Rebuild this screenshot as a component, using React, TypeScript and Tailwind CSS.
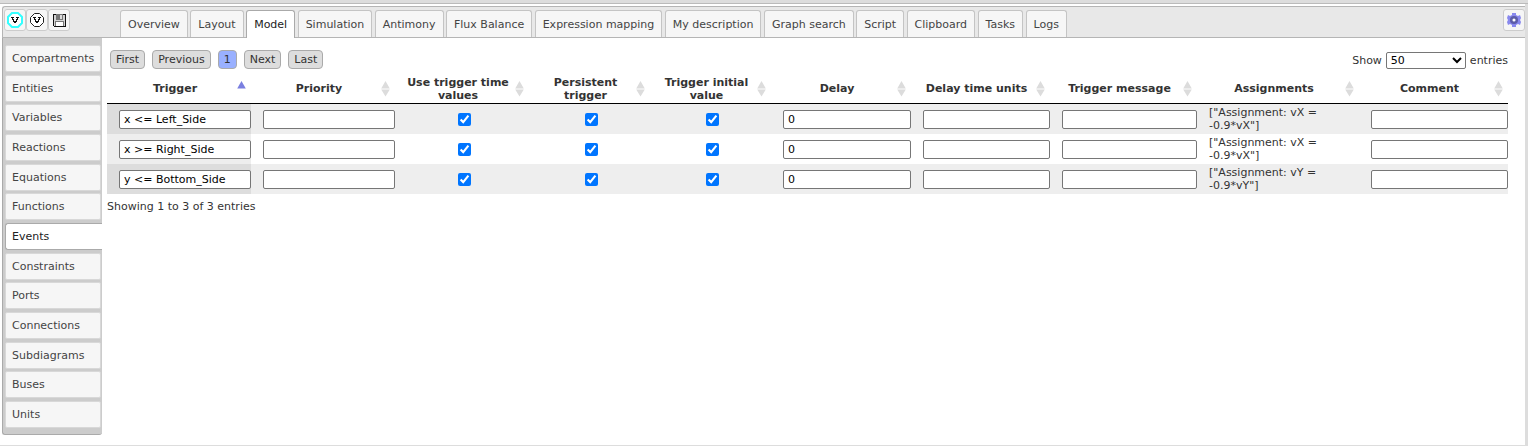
import { useState } from "react";

const tabs = [
  "Overview", "Layout", "Model", "Simulation", "Antimony", "Flux Balance", "Expression mapping",
  "My description", "Graph search", "Script", "Clipboard", "Tasks", "Logs",
];

const sections = [
  "Compartments", "Entities", "Variables", "Reactions", "Equations", "Functions", "Events",
  "Constraints", "Ports", "Connections", "Subdiagrams", "Buses", "Units",
];

const columns = [
  { title: "Trigger", width: "w-[144px]" },
  { title: "Priority", width: "w-[144px]" },
  { title: "Use trigger time values", width: "w-[134px]" },
  { title: "Persistent trigger", width: "w-[121px]" },
  { title: "Trigger initial value", width: "w-[121px]" },
  { title: "Delay", width: "w-[140px]" },
  { title: "Delay time units", width: "w-[139px]" },
  { title: "Trigger message", width: "w-[147px]" },
  { title: "Assignments", width: "w-[162px]" },
  { title: "Comment", width: "w-[149px]" },
];

const events = [
  { trigger: "x <= Left_Side", delay: "0", assignment: '["Assignment: vX = -0.9*vX"]' },
  { trigger: "x >= Right_Side", delay: "0", assignment: '["Assignment: vX = -0.9*vX"]' },
  { trigger: "y <= Bottom_Side", delay: "0", assignment: '["Assignment: vY = -0.9*vY"]' },
];

function DiagramIcon({ active = false }: { active?: boolean }) {
  return (
    <svg width="16" height="16" viewBox="0 0 16 16" aria-hidden="true">
      <path
        d={active ? "M5 1h6l4 4v6l-4 4H5l-4-4V5z" : "M5.500 1.500h5l4 4v5l-4 4h-5l-4-4v-5z"}
        fill="#fff"
        stroke={active ? "#33ffff" : "#222"}
        strokeWidth={active ? 2 : 1}
      />
      <path
        d="M4 5h3v1H4zM9 5h3v1H9zM5 6h1v1H5zM10 6h1v1h-1zM5 7h2v1H5zM9 7h2v1H9zM6 8h1v1H6zM9 8h1v1H9zM6 9h4v1H6zM7 10h2v1H7z"
        fill="#111"
        shapeRendering="crispEdges"
      />
    </svg>
  );
}

function SaveIcon() {
  return (
    <svg width="16" height="16" viewBox="0 0 16 16" aria-hidden="true" shapeRendering="crispEdges">
      <path d="M2 2h13v13H3l-1-1z" fill="#111" />
      <path d="M3 3h11v11H3z" fill="#d4d4d4" />
      <path d="M5 2h7v6H5z" fill="#777" />
      <path d="M9 3h2v4H9z" fill="#ddd" />
      <path d="M4 9h9v5H4z" fill="#777" />
      <path d="M5 10h7v4H5z" fill="#fff" />
    </svg>
  );
}

function GearIcon() {
  return (
    <svg width="16" height="16" viewBox="0 0 16 16" aria-hidden="true">
      <path
        d="M6 1h4v2l2 1 2-1 1 3-1 2 1 2-1 3-2-1-2 1v2H6v-2l-2-1-2 1-1-3 1-2-1-2 1-3 2 1 2-1z"
        fill="#8888ee"
      />
      <circle cx="8" cy="8" r="2.800" fill="#fff" stroke="#5c5ca8" strokeWidth="2.500" />
    </svg>
  );
}

function SortMark({ ascending }: { ascending: boolean }) {
  return (
    <svg
      className="absolute right-1 top-1/2 -mt-2"
      width="11"
      height="16"
      viewBox="0 0 11 16"
      aria-hidden="true"
    >
      {ascending ? (
        <path d="M5.500 0L9.800 7.500H1.200z" fill="#7a7fe0" />
      ) : (
        <path d="M5.500 0L9.800 7.500H1.200zM5.500 15.500L9.800 8.500H1.200z" fill="#dcdcdc" />
      )}
    </svg>
  );
}

const toolButton =
  "flex size-[22px] items-center justify-center rounded-[3px] border border-[#ccc] bg-[#f6f6f6]";
const pageButton = "h-[19px] rounded-[4px] border border-[#aaa] px-[5px] text-[#333]";
const field =
  "block h-[19px] w-full rounded-[2px] border border-[#767676] bg-white px-1 text-black outline-none";
const tick = "size-[13px] accent-[#0075ff]";

export default function App() {
  const [section, setSection] = useState("Events");
  const [tab, setTab] = useState("Model");

  return (
    <div className="flex min-h-screen flex-col border-b border-[#ddd] bg-[#ddd] font-['DejaVu_Sans','Verdana',sans-serif] text-[11px] leading-[13px] text-[#333]">
      <div className="h-1 border-b border-[#bbb]" />
      <div className="mr-[3px] flex flex-1 flex-col bg-white pl-0.5 pt-0.5">
        <header className="flex h-8 items-end justify-between rounded-tl-[3px] border-b border-l border-t border-[#b5b5b5] bg-[#e8e8e8]">
          <div className="flex w-[117px] shrink-0 self-start pl-px pt-0.5">
            <button className={toolButton} aria-label="Diagram"><DiagramIcon active /></button>
            <button className={toolButton} aria-label="New diagram"><DiagramIcon /></button>
            <button className={toolButton} aria-label="Save"><SaveIcon /></button>
          </div>
          <nav className="mr-auto flex w-[947px] justify-between">
            {tabs.map((name) => (
              <button
                key={name}
                onClick={() => setTab(name)}
                className={
                  name === tab
                    ? "-mb-px h-7 whitespace-nowrap rounded-t-[3px] border border-b-0 border-[#aaa] bg-white px-[7px] text-[#222]"
                    : "h-[27px] whitespace-nowrap rounded-t-[3px] border border-b-0 border-[#c4c4c4] bg-[#f6f6f6] px-[7px] text-[#444]"
                }
              >
                {name}
              </button>
            ))}
          </nav>
          <button className={toolButton + " mt-0.5 self-start"} aria-label="Settings"><GearIcon /></button>
        </header>

        <div className="flex items-start">
          <nav className="flex min-h-[397px] w-[100px] shrink-0 flex-col justify-between rounded-b-[3px] border-b border-l border-[#aaa] bg-[#ccc] pb-1.5 pl-0.5 pr-px pt-[7px]">
            {sections.map((name) => (
              <button
                key={name}
                onClick={() => setSection(name)}
                className={
                  name === section
                    ? "-mr-px h-[27px] rounded-l-[3px] border border-r-0 border-[#aaa] bg-white pl-[6px] text-left text-[#222]"
                    : "h-[27px] rounded-[2px] border border-[#d8d8d8] bg-[#f6f6f6] pl-[6px] text-left text-[#444]"
                }
              >
                {name}
              </button>
            ))}
          </nav>

          <main className="min-w-0 flex-1 pl-[5px] pr-[17px] pt-3">
            <div className="flex h-6 items-start justify-between">
              <div className="flex gap-[7px] pl-[3px]">
                <button className={pageButton + " bg-[#ddd]"}>First</button>
                <button className={pageButton + " bg-[#ddd]"}>Previous</button>
                <button className={pageButton + " bg-[#99b0ff]"}>1</button>
                <button className={pageButton + " bg-[#ddd]"}>Next</button>
                <button className={pageButton + " bg-[#ddd]"}>Last</button>
              </div>
              <label className="flex items-center gap-1 pt-0.5">
                Show
                <span className="relative flex">
                  <select className="h-[17px] w-20 appearance-none rounded-[2px] border border-[#767676] bg-white pl-1 leading-[13px] text-black">
                    <option>50</option>
                    <option>100</option>
                  </select>
                  <svg className="pointer-events-none absolute right-1 top-1" width="10" height="8" viewBox="0 0 10 8" aria-hidden="true">
                    <path d="M1 2l4 4 4-4" fill="none" stroke="#000" strokeWidth="2" />
                  </svg>
                </span>
                entries
              </label>
            </div>

            <table className="w-full table-fixed border-separate border-spacing-0">
              <colgroup>
                {columns.map((c) => <col key={c.title} className={c.width} />)}
              </colgroup>
              <thead>
                <tr className="h-[30px]">
                  {columns.map((c, i) => (
                    <th key={c.title} className="relative border-b border-black py-0 pl-2 pr-4 text-center align-middle font-bold">
                      {c.title}
                      <SortMark ascending={i === 0} />
                    </th>
                  ))}
                </tr>
              </thead>
              <tbody>
                {events.map((e) => (
                  <tr key={e.trigger} className="group h-[30px] odd:bg-[#eee]">
                    <td className="bg-[#eee] pl-3 group-odd:bg-[#ddd]">
                      <input aria-label="Trigger" className={field} defaultValue={e.trigger} />
                    </td>
                    <td className="pl-3"><input aria-label="Priority" className={field} /></td>
                    {["Use trigger time values", "Persistent trigger", "Trigger initial value"].map((name) => (
                      <td key={name} className="pl-1 text-center">
                        <input aria-label={name} type="checkbox" defaultChecked className={tick + " align-middle"} />
                      </td>
                    ))}
                    <td className="pl-3"><input aria-label="Delay" className={field} defaultValue={e.delay} /></td>
                    <td className="pl-3"><input aria-label="Delay time units" className={field} /></td>
                    <td className="pl-3"><input aria-label="Trigger message" className={field} /></td>
                    <td className="py-0 pl-3 pr-6">{e.assignment}</td>
                    <td className="pl-3"><input aria-label="Comment" className={field} /></td>
                  </tr>
                ))}
              </tbody>
            </table>
            <p className="pt-1.5">Showing 1 to 3 of 3 entries</p>
          </main>
        </div>
      </div>
    </div>
  );
}
